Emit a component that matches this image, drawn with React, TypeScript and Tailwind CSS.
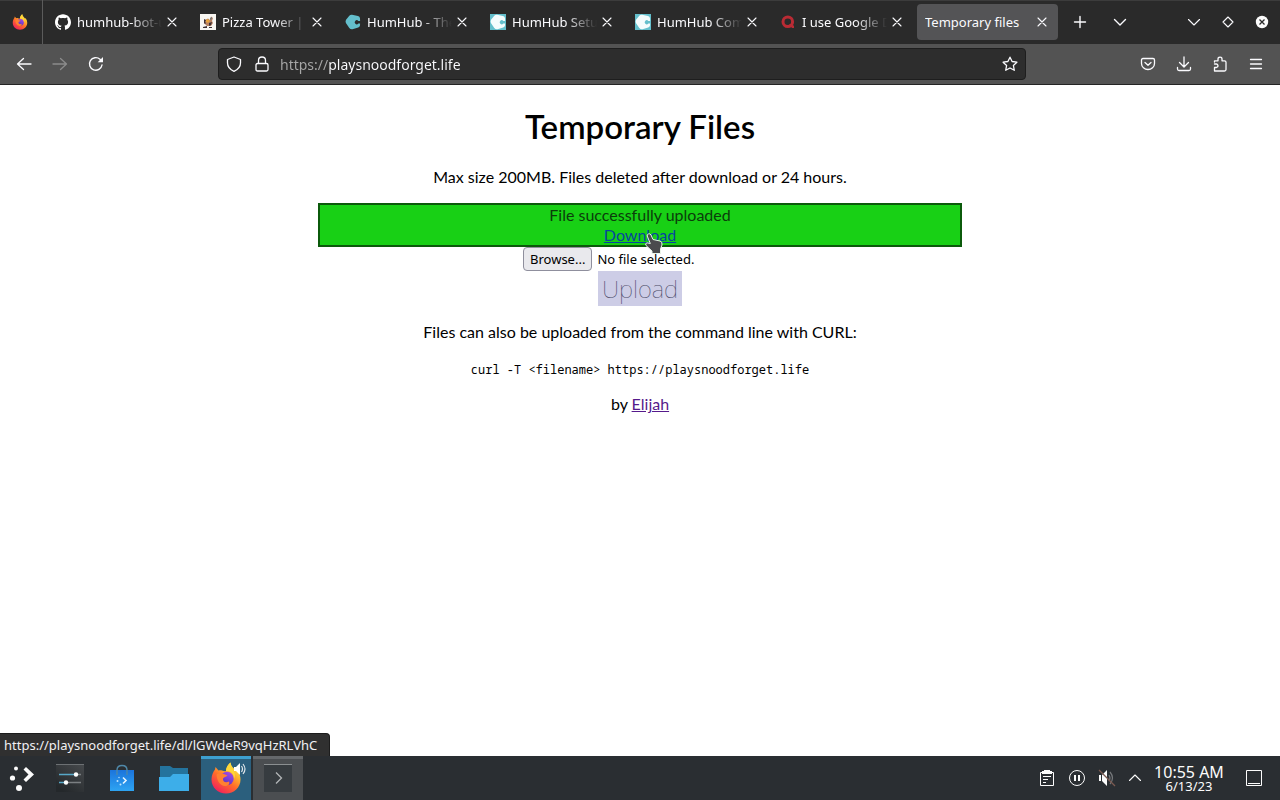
import React from "react";
import { SiGithub } from "react-icons/si";

type IconProps = { className?: string };

function FirefoxLogo({ id, className }: { id: string; className?: string }) {
  return (
    <svg viewBox="1 0 30 32" className={className} aria-hidden="true">
      <defs>
        <linearGradient id={id} x1="0.85" y1="0.05" x2="0.25" y2="0.95">
          <stop offset="0" stopColor="#fff44f" />
          <stop offset="0.3" stopColor="#ffb52e" />
          <stop offset="0.6" stopColor="#ff6a2a" />
          <stop offset="1" stopColor="#f0245a" />
        </linearGradient>
        <linearGradient id={id + "-globe"} x1="0.8" y1="0" x2="0.3" y2="1">
          <stop offset="0" stopColor="#a94be0" />
          <stop offset="0.5" stopColor="#7a3fd8" />
          <stop offset="1" stopColor="#5a2fb4" />
        </linearGradient>
      </defs>
      <path
        d="M16 31.500C8 31.500 1.500 25.500 1.500 17.500C1.500 13.500 3 10 5 7.500L5.500 5L8.500 8.500C10 8 11 8 12 8.500C13.500 9 15 9.500 16 9C16 5.500 18.500 2 20.500 0.500C21 4.500 24 6 26 9L27.500 8.500C29.500 11.500 30.500 14.500 30.500 17.500C30.500 25.500 24 31.500 16 31.500Z"
        fill={`url(#${id})`}
      />
      <circle cx="17" cy="16.500" r="6.700" fill={`url(#${id}-globe)`} />
      <path d="M6.500 12.500C9.500 10.500 12.500 11.500 14.500 12.300L17.500 13.500C16 15.300 13.500 15 13 16.500C12.500 19.500 15.500 21.500 19 19.500C20.500 22.500 17 24.500 14.500 24C9 23 7 18 6.500 12.500Z" fill="#ff8030" />
      <path d="M16 9C20 8.500 24 11 24 17C25.500 14 25 11 23.500 9C21.500 6.500 20.500 4 20.500 0.500C18 2.500 16 5.500 16 9Z" fill="#ffd83a" />
    </svg>
  );
}

function HumHubLogo({ tile, className }: { tile: boolean; className?: string }) {
  return (
    <svg viewBox="0 0 16 16" className={className} aria-hidden="true">
      {tile && <rect width="16" height="16" fill="#64bfcc" />}
      <path
        d="M7 0.800L13 2Q14.800 2.500 15 4.300L15.100 7L13.300 7A2 2 0 1 0 13.300 9.500L15.100 9.500L15 11.500Q14.700 13 13.200 13.500L7.500 15.200Q5.500 15.500 4.300 14L0.900 9Q0.200 7.500 1 5.800L4.300 1.800Q5.300 0.600 7 0.800Z"
        fill={tile ? "#f4fcfd" : "#64bfcc"}
      />
    </svg>
  );
}

function PizzaIcon({ className }: IconProps) {
  return (
    <svg viewBox="0 0 16 16" className={className} aria-hidden="true">
      <rect width="16" height="16" fill="#f9f7f3" />
      <path d="M5 6L8 4.500L10 6L11 2.500L13 4L12 7L13 9L11 12H7L4 9Z" fill="#b98262" />
      <path d="M6 6L8 5L10 7L8 9L6 8Z" fill="#e8a33d" />
      <path d="M4 5L6 6L5 8L6 9L5 10L4 9ZM9 9L12 8L11 11L9 12ZM3 13L7 12V14H3ZM9 13H12V14H9Z" fill="#3d3034" />
      <path d="M10 4L12 3V5L10 6Z" fill="#777" />
    </svg>
  );
}

function RedLogo({ className }: IconProps) {
  return (
    <svg viewBox="0 0 16 16" className={className} aria-hidden="true">
      <circle cx="7.800" cy="7.800" r="4.800" fill="none" stroke="#b92b34" strokeWidth="3" />
      <path d="M9 10.500L11.500 9.500L14 12V14H12Z" fill="#b92b34" />
    </svg>
  );
}

const stroke = {
  fill: "none",
  stroke: "currentColor",
  strokeLinecap: "round" as const,
  strokeLinejoin: "round" as const,
};

function Glyph({ d, size = "size-4", width = 1.3 }: { d: string; size?: string; width?: number }) {
  return (
    <svg viewBox="0 0 16 16" className={size} aria-hidden="true" {...stroke} strokeWidth={width}>
      <path d={d} />
    </svg>
  );
}

const paths = {
  close: "M4 4L12 12M12 4L4 12",
  plus: "M8 2.500V13.500M2.500 8H13.500",
  chevron: "M2.500 5.500L8 11L13.500 5.500",
  diamond: "M8 3L13 8L8 13L3 8Z",
  back: "M15 8H1.500M7.500 2.500L1.500 8L7.500 13.500",
  forward: "M1 8H14.500M8.500 2.500L14.500 8L8.500 13.500",
  shield: "M8 1L14.500 3.500V7C14.500 11 12 13.500 8 15.300C4 13.500 1.500 11 1.500 7V3.500Z",
  lock: "M3.500 7.500H12.500Q14 7.500 14 9V13.500Q14 15 12.500 15H3.500Q2 15 2 13.500V9Q2 7.500 3.500 7.500ZM4.500 7V4.500C4.500 -0.200 11.500 -0.200 11.500 4.500V7",
  star: "M8 1.200L10.100 5.500L14.900 6.200L11.400 9.500L12.300 14.300L8 12L3.700 14.300L4.600 9.500L1.100 6.200L5.900 5.500Z",
  pocket: "M3 2.500H13Q14.500 2.500 14.500 4V7.500C14.500 11 11.500 13.500 8 13.500C4.500 13.500 1.500 11 1.500 7.500V4Q1.500 2.500 3 2.500ZM5 6.500L8 9.300L11 6.500",
  download: "M8 1V10.500M3.500 6.500L8 11L12.500 6.500M1.500 11.500V13Q1.500 14.500 3 14.500H13Q14.500 14.500 14.500 13V11.500",
  puzzle:
    "M2.500 6V4.800H6V3C6 0.600 10 0.600 10 3V4.800H12.500Q14 4.800 14 6.300V13.500Q14 15 12.500 15H2.500V11.500H4.300C6.500 11.500 6.500 8 4.300 8H2.500",
  menu: "M2.500 3.500H13.500M2.500 8H13.500M2.500 12.500H13.500",
  up: "M2.500 10.500L8 5L13.500 10.500",
};

type Tab = { title: string; icon?: React.ReactNode };

const tabs: Tab[] = [
  { title: "humhub-bot-updater", icon: <SiGithub className="size-4 text-white" /> },
  { title: "Pizza Tower | Wiki", icon: <PizzaIcon className="size-4" /> },
  { title: "HumHub - The flexible", icon: <HumHubLogo tile={false} className="size-4" /> },
  { title: "HumHub Setup Guide", icon: <HumHubLogo tile className="size-4" /> },
  { title: "HumHub Community", icon: <HumHubLogo tile className="size-4" /> },
  { title: "I use Google Drive", icon: <RedLogo className="size-4" /> },
  { title: "Temporary files" },
];

function TabStrip() {
  return (
    <header className="flex h-11 items-stretch bg-[#2a2a2a] text-[#fbfbfe] shadow-[inset_0_1px_0_#3c3c3c]">
      <button aria-label="Firefox" className="flex w-[43px] shrink-0 items-center border-r border-[#5b5b5b] pl-3">
        <FirefoxLogo id="fx-small" className="size-4" />
      </button>
      <div role="tablist" className="flex min-w-0 items-center gap-1 pl-1">
        {tabs.map((tab, i) => {
          const active = i === tabs.length - 1;
          return (
            <div
              key={tab.title}
              className={
                "flex h-9 w-[141px] min-w-0 items-center rounded pr-1.5 pl-2 " + (active ? "bg-[#545456]" : "")
              }
            >
              <button role="tab" aria-selected={active} className="flex min-w-0 flex-1 items-center gap-1.5">
                {tab.icon && <span className="shrink-0">{tab.icon}</span>}
                <span
                  className={
                    "min-w-0 flex-1 overflow-hidden text-left text-[13px] leading-5 whitespace-nowrap " +
                    (active ? "" : "[mask-image:linear-gradient(to_left,transparent,black_32px)]")
                  }
                >
                  {tab.title}
                </span>
              </button>
              <button aria-label={"Close " + tab.title} className="flex size-5 shrink-0 items-center justify-center">
                <Glyph d={paths.close} width={1.1} />
              </button>
            </div>
          );
        })}
      </div>
      <div className="flex shrink-0 items-center pl-0.5">
        <button aria-label="New tab" className="flex w-10 items-center justify-center">
          <Glyph d={paths.plus} width={1.4} />
        </button>
        <button aria-label="List all tabs" className="flex w-10 items-center justify-center">
          <Glyph d={paths.chevron} width={1.4} />
        </button>
      </div>
      <div className="ml-auto flex shrink-0 items-center pr-px">
        <button aria-label="Minimize" className="flex w-[34px] items-center justify-center">
          <Glyph d={paths.chevron} width={1.1} />
        </button>
        <button aria-label="Maximize" className="flex w-[34px] items-center justify-center">
          <Glyph d={paths.diamond} width={1.1} />
        </button>
        <button aria-label="Close window" className="flex w-[34px] items-center justify-center">
          <svg viewBox="0 0 16 16" className="size-4" aria-hidden="true">
            <circle cx="8" cy="8" r="6.2" fill="#fcfcfc" />
            <path d="M5.500 5.500L10.500 10.500M10.500 5.500L5.500 10.500" stroke="#2a2a2a" strokeWidth="1.3" />
          </svg>
        </button>
      </div>
    </header>
  );
}

function ToolButton({ label, children, dim }: { label: string; children: React.ReactNode; dim?: boolean }) {
  return (
    <button
      aria-label={label}
      disabled={dim}
      className={"flex h-8 w-9 items-center justify-center " + (dim ? "text-[#8c8c8c]" : "text-[#fbfbfe]")}
    >
      {children}
    </button>
  );
}

function Toolbar() {
  return (
    <nav className="flex items-center gap-[104px] border-b border-[#242424] bg-[#535353] px-1.5 py-1">
      <div className="flex shrink-0">
        <ToolButton label="Back">
          <Glyph d={paths.back} />
        </ToolButton>
        <ToolButton label="Forward" dim>
          <Glyph d={paths.forward} />
        </ToolButton>
        <ToolButton label="Reload">
          <svg viewBox="0 0 16 16" className="size-4" aria-hidden="true" {...stroke} strokeWidth="1.4">
            <path d="M14 9A6.300 6.300 0 1 1 12 3.300L14 5.200" />
            <path d="M15 1V6.300H9.700Z" fill="currentColor" stroke="none" />
          </svg>
        </ToolButton>
      </div>
      <div className="flex h-8 min-w-0 flex-1 items-center rounded border border-[#1e1e1e] bg-[#2d2d2d] px-[7px] text-[#fbfbfe]">
        <button aria-label="Tracking protection" className="mr-3">
          <Glyph d={paths.shield} />
        </button>
        <button aria-label="Connection secure" className="mr-2.5">
          <Glyph d={paths.lock} />
        </button>
        <input
          aria-label="Address"
          defaultValue="https://playsnoodforget.life"
          className="min-w-0 flex-1 bg-[linear-gradient(90deg,#a8a8a8_49px,#fbfbfe_49px)] bg-clip-text pt-0.5 text-[14px] leading-6 text-transparent outline-none"
        />
        <button aria-label="Bookmark this page">
          <Glyph d={paths.star} />
        </button>
      </div>
      <div className="flex shrink-0">
        <ToolButton label="Save to Pocket">
          <Glyph d={paths.pocket} />
        </ToolButton>
        <ToolButton label="Downloads">
          <Glyph d={paths.download} />
        </ToolButton>
        <ToolButton label="Extensions">
          <Glyph d={paths.puzzle} />
        </ToolButton>
        <ToolButton label="Application menu">
          <Glyph d={paths.menu} />
        </ToolButton>
      </div>
    </nav>
  );
}

function HandCursor() {
  return (
    <svg viewBox="0 0 20 22" className="pointer-events-none absolute top-2 left-10 h-[22px] w-5" aria-hidden="true">
      <path
        d="M4.200 1Q6 0.200 7 2L9 6.500L16 8Q18.500 8.500 18 12L16.500 16V20.500H8V18L2 12.500Q0.800 10.500 3 9.800L6.300 10.500L3.200 3Q3 1.500 4.200 1Z"
        fill="#4b4b4d"
        stroke="#eaf5ea"
        strokeWidth="1"
      />
    </svg>
  );
}

function Page() {
  return (
    <main className="relative flex flex-1 flex-col items-center bg-white pt-5 text-center font-[Lato,sans-serif] text-base leading-5 text-black">
      <h1 className="text-[33px] leading-[42px] font-semibold">Temporary Files</h1>
      <p className="mt-5">Max size 200MB. Files deleted after download or 24 hours.</p>
      <div className="mt-4 box-content w-1/2 min-w-[300px] border-2 border-[#0b5a0b] bg-[#18d015]">
        <p className="text-[#0b3d0b]">File successfully uploaded</p>
        <span className="relative inline-block h-5">
          <a href="#download" className="text-[#0645a0] underline">
            Download
          </a>
          <HandCursor />
        </span>
      </div>
      <form className="flex flex-col items-center">
        <label className="flex h-6 w-[234px] items-center gap-[5px] font-['Noto_Sans',sans-serif] text-[13px]">
          <span className="rounded border border-[#8f8f9d] bg-[#e9e9ed] px-1.5 leading-[22px]">Browse...</span>
          <span>No file selected.</span>
          <input type="file" className="sr-only" />
        </label>
        <button
          type="button"
          className="h-[35px] bg-[#cdcde6] px-1 font-['Noto_Sans',sans-serif] text-2xl font-thin text-[#4a4a66]"
        >
          Upload
        </button>
      </form>
      <p className="mt-4">Files can also be uploaded from the command line with CURL:</p>
      <code className="mt-[18px] font-['Noto_Sans_Mono','DejaVu_Sans_Mono',monospace] text-xs leading-5">
        curl -T &lt;filename&gt; https://playsnoodforget.life
      </code>
      <p className="mt-3.5">
        by{" "}
        <a href="#elijah" className="text-[#551a8b] underline">
          Elijah
        </a>
      </p>
      <div className="absolute bottom-0 left-0 rounded-tr border-t border-r border-[#1c1c1c] bg-[#303030] py-px pr-3 pl-1 font-['Noto_Sans',sans-serif] text-[13px] text-[#f0f0f4]">
        https://playsnoodforget.life/dl/lGWdeR9vqHzRLVhC
      </div>
    </main>
  );
}

function Taskbar() {
  return (
    <footer className="flex h-11 items-stretch bg-[#2a2e32] text-[#fcfcfc]">
      <button aria-label="Application launcher" className="flex w-11 items-center justify-center">
        <svg viewBox="0 0 26 26" className="size-[26px]" aria-hidden="true" fill="#fcfcfc">
          <circle cx="7" cy="3.500" r="2" />
          <circle cx="3.500" cy="13" r="2.600" />
          <circle cx="10" cy="23" r="3" />
          <path d="M17 2L25 9.500L17 17L14.500 14.500L19.500 9.500L14.500 4.500Z" />
        </svg>
      </button>
      <button aria-label="System settings" className="flex w-[52px] items-center justify-center">
        <svg viewBox="0 0 28 28" className="size-7" aria-hidden="true">
          <defs>
            <linearGradient id="panel" x1="1" y1="0" x2="0.3" y2="1">
              <stop offset="0" stopColor="#474a4d" />
              <stop offset="1" stopColor="#24282b" />
            </linearGradient>
          </defs>
          <rect width="28" height="28" fill="url(#panel)" />
          <path d="M0 0.500H28" stroke="#6c7073" />
          <path d="M3 10.500H20M3 18.500H10" stroke="#57a8c8" strokeWidth="1.300" />
          <path d="M20 10.500H25M12 18.500H25" stroke="#7b7f82" strokeWidth="1.300" />
          <circle cx="20" cy="10.500" r="2.200" fill="#fff" />
          <circle cx="10" cy="18.500" r="2.200" fill="#fff" />
        </svg>
      </button>
      <button aria-label="Discover" className="flex w-[52px] items-center justify-center">
        <svg viewBox="0 0 28 28" className="size-7" aria-hidden="true">
          <defs>
            <linearGradient id="bag" x1="0" y1="0" x2="0" y2="1">
              <stop offset="0" stopColor="#1b74dc" />
              <stop offset="1" stopColor="#2ea4f2" />
            </linearGradient>
          </defs>
          <path d="M2 6H26V27H2Z" fill="url(#bag)" />
          <path d="M9 11V6Q9 1.500 14 1.500T19 6V11" fill="none" stroke="#4f88a8" strokeWidth="1.400" />
          <path d="M15 13.500L18 16.500L15 19.500" fill="none" stroke="#e6f5ff" strokeWidth="1.600" />
          <circle cx="11" cy="13.500" r="0.700" fill="#bfe4ff" />
          <circle cx="9.500" cy="17" r="1" fill="#bfe4ff" />
          <circle cx="12.500" cy="20.500" r="1" fill="#bfe4ff" />
        </svg>
      </button>
      <button aria-label="Files" className="flex w-[52px] items-center justify-center">
        <svg viewBox="0 0 32 28" className="h-7 w-8" aria-hidden="true">
          <path d="M2 2H12L15 4H30V18H2Z" fill="#24739d" />
          <path d="M1 13H12L15 10H31V27H1Z" fill="#3daee9" />
        </svg>
      </button>
      <button
        aria-label="Firefox"
        className="ml-px flex w-[50px] items-center justify-center bg-[#2b5f7d] shadow-[inset_0_3px_0_#3d9fd0]"
      >
        <span className="relative">
          <FirefoxLogo id="fx-large" className="size-8" />
          <svg viewBox="0 0 12 14" className="absolute top-0 -right-1 h-3.5 w-3" aria-hidden="true">
            <path d="M0 5H2L6 1V13L2 9H0Z" fill="#fff" />
            <path d="M7.500 4Q9.500 7 7.500 10M9 2Q13 7 9 12" fill="none" stroke="#dfe6ea" strokeWidth="1.200" />
          </svg>
        </span>
      </button>
      <button
        aria-label="Terminal"
        className="ml-0.5 flex w-[50px] items-center justify-center bg-[#4b4e51] shadow-[inset_0_3px_0_#65686b]"
      >
        <svg viewBox="0 0 28 28" className="size-7" aria-hidden="true">
          <rect width="28" height="28" fill="#373c40" />
          <path d="M0 0.500H28" stroke="#8b8f91" />
          <path d="M12 8.500L17.500 14L12 19.500" fill="none" stroke="#b3b6b8" strokeWidth="1.300" />
        </svg>
      </button>
      <div className="ml-auto flex items-center pr-2.5">
        <button aria-label="Clipboard" className="flex w-[30px] justify-center">
          <svg viewBox="0 0 16 18" className="h-[18px] w-4" aria-hidden="true">
            <path d="M1.500 3.500H14.500V16.500H1.500Z" fill="none" stroke="#fcfcfc" />
            <path d="M3 2H5V1H11V2H13V5H3Z" fill="#fcfcfc" />
            <path d="M4 7.500H12M4 10.500H9M4 13.500H7" stroke="#fcfcfc" />
          </svg>
        </button>
        <button aria-label="Media paused" className="flex w-[30px] justify-center">
          <svg viewBox="0 0 18 18" className="size-[18px]" aria-hidden="true">
            <circle cx="9" cy="9" r="7.500" fill="none" stroke="#fcfcfc" />
            <path d="M7 6V12M11 6V12" stroke="#fcfcfc" strokeWidth="2" />
          </svg>
        </button>
        <button aria-label="Volume muted" className="flex w-[30px] justify-center">
          <svg viewBox="0 0 18 18" className="size-[18px]" aria-hidden="true">
            <path d="M1 6H3V12H1ZM4 6L9 1V17L4 12Z" fill="#fcfcfc" />
            <path d="M11 6Q13 9 11 12M12 3Q17 9 12 15" fill="none" stroke="#75787b" strokeWidth="1.200" />
            <path d="M1 1L17 17" stroke="#7b5a50" strokeWidth="1.200" />
          </svg>
        </button>
        <button aria-label="Show hidden icons" className="flex w-[26px] justify-center">
          <Glyph d={paths.up} width={1.1} />
        </button>
        <button className="flex w-[82px] flex-col items-center font-['Noto_Sans',sans-serif]">
          <span className="text-base leading-4">10:55 AM</span>
          <span className="text-[13px] leading-3">6/13/23</span>
        </button>
        <button aria-label="Show desktop" className="ml-2 flex w-8 justify-center">
          <svg viewBox="0 0 16 16" className="size-4" aria-hidden="true">
            <path d="M0.500 0.500H15.500V15.500H0.500ZM2 13.500H14" fill="none" stroke="#fcfcfc" />
          </svg>
        </button>
      </div>
    </footer>
  );
}

export default function App() {
  return (
    <div className="flex min-h-screen flex-col font-['Noto_Sans',sans-serif]">
      <TabStrip />
      <Toolbar />
      <Page />
      <Taskbar />
    </div>
  );
}
